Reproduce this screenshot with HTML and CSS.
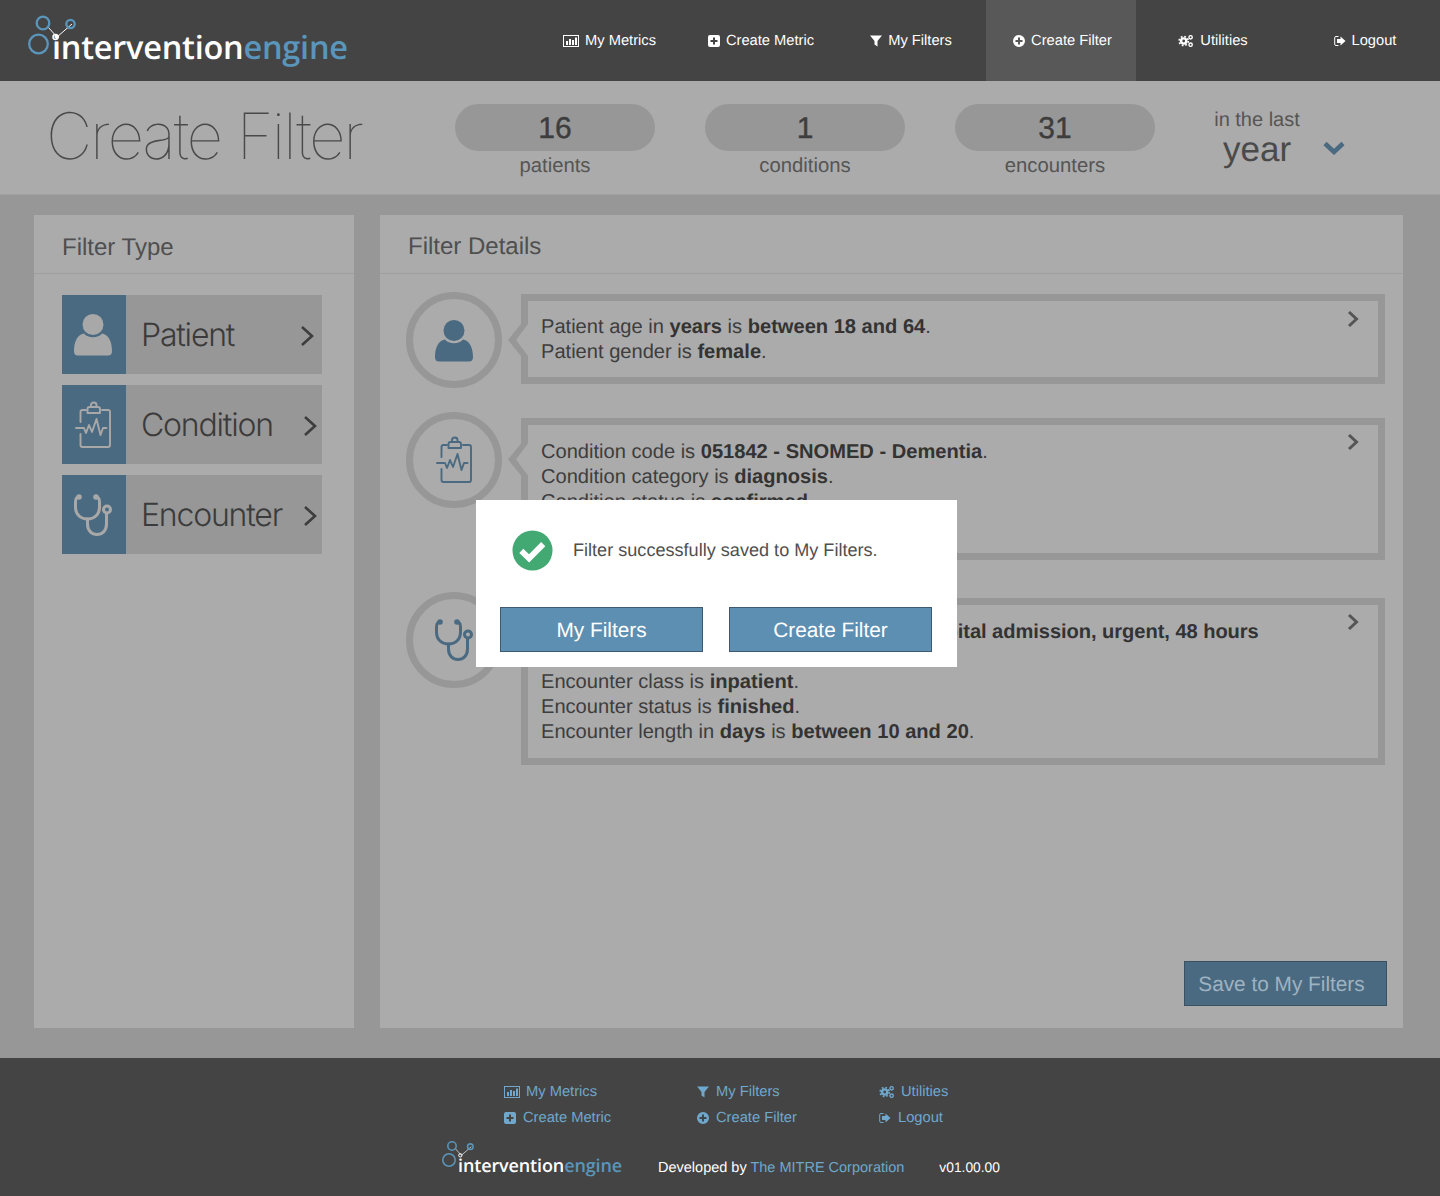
FILE: index.html
```html
<!DOCTYPE html>
<html lang="en">
<head>
<meta charset="utf-8">
<title>Create Filter - Intervention Engine</title>
<link rel="stylesheet" href="styles.css">
</head>
<body>
<svg class="defs" width="0" height="0" aria-hidden="true">
  <symbol id="i-person" viewBox="0 0 38 42"><circle cx="19" cy="10.5" r="10.5" fill="currentColor"/><path fill="currentColor" d="M4 41.500Q0 41.500 0 37C0 28 3 21 10 19.500C14 24.500 24 24.500 28 19.500C35 21 38 28 38 37Q38 41.500 34 41.500Z"/></symbol>
  <symbol id="i-clip" viewBox="0 0 36 47"><g fill="none" stroke="currentColor" stroke-width="1.900" stroke-linecap="round" stroke-linejoin="round"><path d="M11 9H7.500Q5.500 9 5.500 11V21M5.500 33V44Q5.500 46 7.500 46H33Q35 46 35 44V11Q35 9 33 9H27"/><path d="M12.500 12V8Q12.500 6 14.500 6H23Q25 6 25 8V12ZM16 6V4Q16 1.500 18.700 1.500Q21.500 1.500 21.500 4V6"/><path d="M1 27H9L11 32L14 24L17 31L21.500 18L25.500 34L28 27H31.500"/></g></symbol>
  <symbol id="i-steth" viewBox="0 0 38 42"><g fill="none" stroke="currentColor" stroke-width="3" stroke-linecap="round"><path d="M5 3C2 3 1.500 5 1.500 8V13C1.500 21 7 25 13.500 25C20 25 25.500 21 25.500 13V8C25.500 5 25 3 22 3"/><path d="M13.500 25V30C13.500 37 18 40.500 23 40.500C28 40.500 32.500 37 32.500 30V20"/><circle cx="33" cy="15.500" r="3.500"/></g><circle cx="5" cy="3" r="2.800" fill="currentColor"/><circle cx="22" cy="3" r="2.800" fill="currentColor"/></symbol>
  <symbol id="i-bars" viewBox="0 0 16 12"><path fill="currentColor" d="M0 0H16V12H0ZM1 1V11H15V1Z"/><path fill="currentColor" d="M3 6H5V10H3ZM6 4H8V10H6ZM9 5H11V10H9ZM12 2.500H14V10H12Z"/></symbol>
  <symbol id="i-plus-sq" viewBox="0 0 12 12"><path fill="currentColor" fill-rule="evenodd" d="M2 0H10Q12 0 12 2V10Q12 12 10 12H2Q0 12 0 10V2Q0 0 2 0ZM5 2.500V5H2.500V7H5V9.500H7V7H9.500V5H7V2.500Z"/></symbol>
  <symbol id="i-filter" viewBox="0 0 12 12"><path fill="currentColor" d="M0 .500H12L7.500 6V11.500L4.500 9.500V6Z"/></symbol>
  <symbol id="i-plus-ci" viewBox="0 0 12 12"><path fill="currentColor" fill-rule="evenodd" d="M6 0A6 6 0 1 1 6 12A6 6 0 1 1 6 0ZM5 2.500V5H2.500V7H5V9.500H7V7H9.500V5H7V2.500Z"/></symbol>
  <symbol id="i-cogs" viewBox="0 0 16 13"><g fill="none" stroke="currentColor"><circle cx="5.500" cy="6.500" r="2.800" stroke-width="2.600"/><circle cx="5.500" cy="6.500" r="4.900" stroke-width="1.800" stroke-dasharray="1.900 1.950"/><circle cx="13" cy="2.500" r="1.800" stroke-width="1.500"/><circle cx="13" cy="10.500" r="1.800" stroke-width="1.500"/></g></symbol>
  <symbol id="i-logout" viewBox="0 0 12 11"><path fill="none" stroke="currentColor" d="M4.500 1H2Q.700 1 .700 2.300V8.700Q.700 10 2 10H4.500"/><path fill="currentColor" d="M3 3.500H6.500V1L11.500 5.500L6.500 10V7.500H3Z"/></symbol>
  <symbol id="i-right" viewBox="0 0 14 22"><path fill="none" stroke="currentColor" stroke-width="2.600" d="M2 2L12 11L2 20"/></symbol>
  <symbol id="i-right-bold" viewBox="0 0 12 18"><path fill="none" stroke="currentColor" stroke-width="3" d="M2 2L9.500 9L2 16"/></symbol>
  <symbol id="i-logo" viewBox="0 0 60 44"><g fill="none"><path stroke="#fff" stroke-width="1" d="M20 14L29 24L44 11"/><g stroke="#5a95bb" stroke-width="2.300"><circle cx="15" cy="10" r="6.300"/><circle cx="42.500" cy="11" r="4.200"/><circle cx="10.500" cy="31" r="9.300"/></g><circle cx="27.500" cy="24" r="2.500" stroke="#fff" stroke-width="1.500"/></g></symbol>
</svg>

<header class="topbar">
  <a class="logo" href="#"><svg class="logo-mark"><use href="#i-logo"/></svg><span class="logo-text">intervention<span class="logo-accent">engine</span></span></a>
  <nav class="topnav">
    <a class="navlink" href="#"><svg class="ico ico-wide"><use href="#i-bars"/></svg>My Metrics</a>
    <a class="navlink" href="#"><svg class="ico"><use href="#i-plus-sq"/></svg>Create Metric</a>
    <a class="navlink" href="#"><svg class="ico"><use href="#i-filter"/></svg>My Filters</a>
    <a class="navlink navlink-active" href="#"><svg class="ico"><use href="#i-plus-ci"/></svg>Create Filter</a>
    <a class="navlink navlink-wide" href="#"><svg class="ico ico-wide"><use href="#i-cogs"/></svg>Utilities</a>
    <a class="navlink" href="#"><svg class="ico"><use href="#i-logout"/></svg>Logout</a>
  </nav>
</header>

<section class="summary">
  <h1 class="page-title">Create Filter</h1>
  <div class="stats">
    <div class="stat"><div class="stat-pill">16</div><div class="stat-label">patients</div></div>
    <div class="stat"><div class="stat-pill">1</div><div class="stat-label">conditions</div></div>
    <div class="stat"><div class="stat-pill">31</div><div class="stat-label">encounters</div></div>
  </div>
  <div class="period">
    <div class="period-text"><div class="period-small">in the last</div><div class="period-big">year</div></div>
    <svg class="period-chev" viewBox="0 0 22 14"><path fill="none" stroke="currentColor" stroke-width="4.500" d="M2 2.500L11 11L20 2.500"/></svg>
  </div>
</section>

<main class="workspace">
  <aside class="panel panel-types">
    <h2 class="panel-title">Filter Type</h2>
    <div class="type-list">
      <a class="type" href="#"><span class="type-icon"><svg class="ti ti-person"><use href="#i-person"/></svg></span><span class="type-name">Patient</span><svg class="type-chev"><use href="#i-right"/></svg></a>
      <a class="type" href="#"><span class="type-icon"><svg class="ti ti-clip"><use href="#i-clip"/></svg></span><span class="type-name">Condition</span><svg class="type-chev"><use href="#i-right"/></svg></a>
      <a class="type" href="#"><span class="type-icon"><svg class="ti ti-steth"><use href="#i-steth"/></svg></span><span class="type-name">Encounter</span><svg class="type-chev"><use href="#i-right"/></svg></a>
    </div>
  </aside>
  <section class="panel panel-details">
    <h2 class="panel-title panel-title-up">Filter Details</h2>
    <div class="rules">
      <div class="rule rule-first">
        <div class="rule-badge"><svg class="bi bi-person"><use href="#i-person"/></svg></div>
        <div class="rule-box">
          <p>Patient age in <b>years</b> is <b>between 18 and 64</b>.</p>
          <p>Patient gender is <b>female</b>.</p>
          <svg class="rule-chev"><use href="#i-right-bold"/></svg>
        </div>
      </div>
      <div class="rule">
        <div class="rule-badge"><svg class="bi bi-clip"><use href="#i-clip"/></svg></div>
        <div class="rule-box rule-box-cond">
          <p>Condition code is <b>051842 - SNOMED - Dementia</b>.</p>
          <p>Condition category is <b>diagnosis</b>.</p>
          <p>Condition status is <b>confirmed</b>.</p>
          <svg class="rule-chev"><use href="#i-right-bold"/></svg>
        </div>
      </div>
      <div class="rule">
        <div class="rule-badge"><svg class="bi bi-steth"><use href="#i-steth"/></svg></div>
        <div class="rule-box">
          <p class="line-spaced">Encounter code is <b>3241005 - SNOMED - Hospital admission, urgent, 48 hours</b></p>
          <p>Encounter class is <b>inpatient</b>.</p>
          <p>Encounter status is <b>finished</b>.</p>
          <p>Encounter length in <b>days</b> is <b>between 10 and 20</b>.</p>
          <svg class="rule-chev"><use href="#i-right-bold"/></svg>
        </div>
      </div>
    </div>
    <div class="save-row"><button class="save-btn" type="button">Save to My Filters</button></div>
  </section>
</main>

<footer class="footer">
  <div class="footer-links">
    <a class="flink" href="#"><svg class="ico ico-wide"><use href="#i-bars"/></svg>My Metrics</a>
    <a class="flink" href="#"><svg class="ico"><use href="#i-filter"/></svg>My Filters</a>
    <a class="flink" href="#"><svg class="ico ico-wide"><use href="#i-cogs"/></svg>Utilities</a>
    <a class="flink" href="#"><svg class="ico"><use href="#i-plus-sq"/></svg>Create Metric</a>
    <a class="flink" href="#"><svg class="ico"><use href="#i-plus-ci"/></svg>Create Filter</a>
    <a class="flink" href="#"><svg class="ico"><use href="#i-logout"/></svg>Logout</a>
  </div>
  <div class="footer-bottom">
    <a class="logo logo-small" href="#"><svg class="logo-mark"><use href="#i-logo"/></svg><span class="logo-text">intervention<span class="logo-accent">engine</span></span></a>
    <span class="credit">Developed by <a class="credit-link" href="#">The MITRE Corporation</a></span>
    <span class="version">v01.00.00</span>
  </div>
</footer>

<div class="modal" role="dialog">
  <div class="modal-msg">
    <svg class="modal-check" viewBox="0 0 42 42"><circle cx="21" cy="21" r="20.500" fill="#42a973"/><path fill="none" stroke="#fff" stroke-width="6" d="M9.500 21.500L17.500 29L32 14.500"/></svg>
    <span>Filter successfully saved to My Filters.</span>
  </div>
  <div class="modal-actions">
    <button class="modal-btn" type="button">My Filters</button>
    <button class="modal-btn" type="button">Create Filter</button>
  </div>
</div>
</body>
</html>
```
FILE: styles.css
```css
* { box-sizing: border-box; }
html, body { margin: 0; padding: 0; }
body {
  position: relative;
  width: 1440px;
  height: 1196px;
  overflow: hidden;
  background: #979797;
  font-family: "Liberation Sans", Arial, sans-serif;
  color: #3d3d3d;
  text-rendering: geometricPrecision;
}
a { color: inherit; text-decoration: none; }
.defs { position: absolute; }

/* top bar */
.topbar { display: flex; height: 81px; background: #444; }
.logo { position: relative; display: block; margin-left: 52px; padding-top: 24px; }
.logo-mark { position: absolute; left: -24.500px; top: 13px; width: 60px; height: 44px; }
.logo-text { font-family: "Open Sans", sans-serif; font-weight: 600; font-size: 32.500px; line-height: 46px; color: #fff; letter-spacing: -.25px; }
.logo-accent { color: #5a95bb; }
.topnav { display: flex; margin-left: auto; }
.navlink { display: flex; align-items: center; justify-content: center; gap: 6px; width: 150px; height: 81px; font-size: 14.700px; color: #fff; }
.navlink:first-child { padding-right: 3px; }
.navlink-active { padding-left: 3px; background: #585858; }
.navlink-wide { width: 154px; }
.ico { width: 12px; height: 12px; flex: none; }
.ico-wide { width: 16px; }

/* summary */
.summary { display: flex; height: 114px; background: #ababab; border-bottom: 1px solid #a2a2a2; }
.page-title { margin: 18px 0 0 46px; width: 409px; font-family: Inter, sans-serif; font-weight: 100; font-size: 64px; line-height: 76px; letter-spacing: -2.300px; color: #4a4a4a; white-space: nowrap; }
.stats { display: flex; gap: 50px; padding-top: 23px; }
.stat { width: 200px; text-align: center; }
.stat-pill { height: 47px; border-radius: 24px; background: #979797; font-size: 30px; line-height: 50px; color: #3d3d3d; -webkit-text-stroke: .4px #3d3d3d; }
.stat-label { margin-top: 3px; font-size: 20.300px; line-height: 24px; color: #555; }
.period { display: flex; margin-left: 59px; padding-top: 26px; }
.period-text { width: 86px; text-align: center; color: #555; white-space: nowrap; }
.period-small { font-size: 20px; line-height: 26px; }
.period-big { font-size: 35px; line-height: 34px; color: #4a4a4a; }
.period-chev { width: 22px; height: 14px; margin: 34px 0 0 23px; color: #4a6a82; }

/* workspace */
.workspace { display: flex; gap: 26px; height: 863px; padding: 20px 37px 30px 34px; }
.panel { background: #ababab; }
.panel-types { width: 320px; }
.panel-details { position: relative; flex: 1; }
.panel-title { margin: 0; height: 59px; padding: 19px 0 0 28px; border-bottom: 1px solid #9f9f9f; font-weight: 400; font-size: 24px; line-height: 28px; color: #4f4f4f; }
.panel-title-up { padding-top: 18px; }
.type-list { display: flex; flex-direction: column; gap: 11px; padding: 21px 32px 0 28px; }
.type { display: flex; align-items: center; height: 79px; background: #979797; }
.type-icon { display: flex; align-items: center; justify-content: center; width: 64px; height: 79px; padding-right: 2px; background: #4a6a82; color: #a8a8a8; }
.ti-person { width: 38px; height: 42px; }
.ti-clip { width: 36px; height: 47px; }
.ti-steth { width: 38px; height: 42px; }
.type-name { flex: 1; padding-left: 15px; font-family: Inter, sans-serif; font-weight: 300; font-size: 32px; letter-spacing: -1.200px; color: #3b3b3b; }
.type-chev { width: 14px; height: 22px; margin: 2px 5px 0 0; color: #3d3d3d; }
.type:first-child .type-chev { margin-right: 8px; }

/* rules */
.rules { padding: 18px 18px 0 26px; }
.rule { position: relative; display: flex; align-items: flex-start; gap: 19px; }
.rule::before, .rule::after { content: ""; position: absolute; top: 32px; height: 32px; clip-path: polygon(0 50%, 100% 0, 100% 100%); }
.rule::before { left: 102px; width: 13px; background: #979797; }
.rule::after { left: 110px; width: 12px; background: #ababab; }
.rule-badge { display: flex; flex: none; align-items: center; justify-content: center; width: 96px; height: 96px; border: 7px solid #979797; border-radius: 50%; color: #4a6a82; }
.bi-person { width: 38px; height: 42px; margin-top: 2px; }
.bi-clip { width: 36px; height: 47px; }
.bi-steth { width: 38px; height: 42px; }
.rule-box { position: relative; flex: 1; margin: 6px 0 32px; padding: 15px 13px 13px; border: 7px solid #979797; font-size: 20.100px; line-height: 25px; color: #3d3d3d; }
.rule-first .rule-box { margin: 2px 0 28px; padding: 13.500px 13px 12px; }
.rule-box-cond { min-height: 142px; }
.rule-box p { margin: 0; }
.rule-box .line-spaced { margin-bottom: 25px; letter-spacing: -.05px; }
.rule-box b { color: #333; }
.rule-chev { position: absolute; top: 8px; right: 19px; width: 12px; height: 18px; color: #555; }
.rule-first .rule-chev { top: 9px; }

/* save */
.save-row { position: absolute; right: 16px; bottom: 22px; }
.save-btn { width: 203px; height: 45px; padding: 3px 8px 0 0; border: 1px solid #3a5162; background: #4a6a82; font: 20.800px/1 "Liberation Sans", Arial, sans-serif; color: #9fb2c0; text-rendering: geometricPrecision; }

/* footer */
.footer { height: 138px; padding-top: 21px; background: #444; font-size: 14.700px; }
.footer-links { display: grid; grid-template-columns: 193px 182px auto; grid-auto-rows: 26px; margin-left: 504px; width: 500px; }
.flink { display: flex; align-items: center; gap: 6px; color: #6fa8cc; }
.flink .ico:not(.ico-wide) { margin-right: 1px; }
.footer-bottom { position: relative; display: flex; align-items: center; margin-top: 20px; padding-left: 458px; height: 34px; color: #fff; font-size: 14.500px; }
.logo-small { width: 200px; margin: 0; padding: 0 0 5px; }
.logo-small .logo-mark { left: -16px; top: -14px; width: 40px; height: 30px; }
.logo-small .logo-text { font-size: 18px; line-height: 26px; letter-spacing: -.13px; }
.credit { margin-right: 35px; }
.credit-link { color: #6fa8cc; }
.version { margin-bottom: 2px; font-size: 13.800px; }

/* modal */
.modal { position: absolute; left: 476px; top: 500px; width: 481px; height: 167px; padding: 30px 25px 0 24px; background: #fff; }
.modal-msg { display: flex; align-items: center; gap: 20px; height: 41px; padding-left: 12px; font-size: 18.100px; color: #4f4f4f; }
.modal-check { flex: none; width: 41px; height: 41px; }
.modal-actions { display: flex; justify-content: space-between; margin-top: 36px; }
.modal-btn { width: 203px; height: 45px; padding: 3px 0 0; border: 1px solid #3f5a70; background: #5c8fb1; font: 20.800px/1 "Liberation Sans", Arial, sans-serif; color: #fff; text-rendering: geometricPrecision; }
```
